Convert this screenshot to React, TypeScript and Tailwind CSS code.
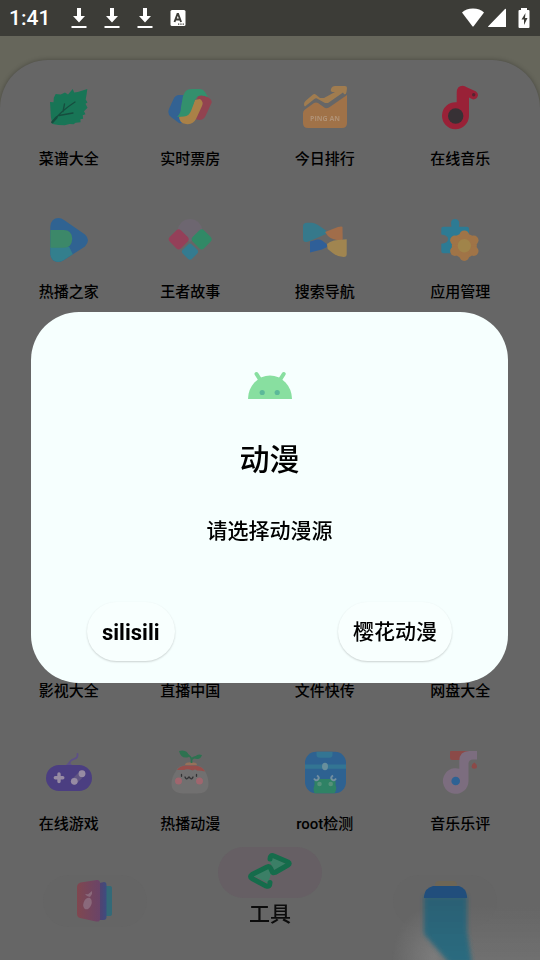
import React from 'react';

interface IconProps {
  children: React.ReactNode;
}

interface AppItem {
  name: string;
  icon?: React.ReactNode;
}

const Icon: React.FC<IconProps> = ({ children }) => (
  <svg viewBox="0 0 44 44" className="h-11 w-11 overflow-visible" aria-hidden="true">
    {children}
  </svg>
);

const LeafIcon = () => (
  <Icon>
    <path
      fill="#15664b"
      d="M40.300 4 39.500 10l-.8 4.500 1.800 3-2 1.200 2 4-3.500 3.500 1.500 3-2.800 1 .5 3.500-2.800.5.2 3-5 .5-2 1.500-4-.2-5 1.200-6-.2-6.200-1-1.500-6.800L3 17l3.500.2.3-4.500 1.900-3.700 5 .4L18 7.500l3 2 4.700-5.500 1.500 3.500 3.500-.6L34 6z"
    />
    <path fill="none" stroke="#134437" strokeWidth="1.300" strokeLinecap="round" d="M5 37.500C10 31 17 24 28 17M16 26.500 17.500 19M12 30.500l14-2.500" />
    <path fill="none" stroke="#134437" strokeWidth="2.400" strokeLinecap="round" d="m5.500 37 4-4.500" />
  </Icon>
);

const TicketIcon = () => (
  <Icon>
    <path fill="#7f3a46" d="M30 9 34 9 41 13q3.500 2 2.500 5l-6 13q-2 4-6 4l-5-1z" />
    <path fill="#2c5580" d="M17 10H11Q7.500 10 5.500 14L1 24q-2 5 2 8l8 6q5 1 9-3L22 12z" />
    <path fill="#94703e" d="M11 31.500 17 30q4-1 6-6l4-9 5-1q4 3 2 7l-6 13q-3 6-10 5-7-1-7-7.500z" />
    <path fill="#2c7d5f" d="m15 11 2-4q2-3 7-3h8q3 0 5 3l3 5q-8-3-11 0-2 2-3 6l-3 8q-2 5-7 5.500l-7 .5q4-4 4-10z" />
  </Icon>
);

const RankIcon = () => (
  <Icon>
    <path fill="#8b6c45" d="M1 19q0-2 2-3.500l7-6q1.500-1 3 .2L17 13h4l11-6h-3q-2-1-1-3 1-3 4-3h10q2 0 2 2l-.5 4q-.5 3-2.500 2l-1-1.500L25 18h-3l-8-4.500q-1.500-.5-3 .8L2 21.500Q1 21 1 19z" />
    <path fill="#8b633f" d="M0 28q0-2 2-3.500l9-6.500q2-1 4 0l7 5q2 .5 4-.5l18-12.500V38q0 5-5 5H5q-5 0-5-5z" />
    <text x="22" y="35.500" textAnchor="middle" fill="#9a7f66" fontSize="7" fontWeight="700" fontFamily="Open Sans, sans-serif">PING AN</text>
  </Icon>
);

const MusicIcon = () => (
  <Icon>
    <path fill="#851d30" d="M18.700 7.500q0-6.500 6-6.800 2.300 0 4 1.500L36 5.500q4 1.500 4 4.800-1 4.700-5.500 4L31 12.500v18A13.500 13.500 0 1 1 18.700 17.300z" />
    <circle cx="17.700" cy="31" r="7.700" fill="#302b2e" />
    <circle cx="35.700" cy="9.700" r="1.700" fill="#4c1f2b" />
  </Icon>
);

const PlayIcon = () => (
  <Icon>
    <path fill="#2a567f" d="M3.300 8.500Q4 0 11.500 0q3 0 5.500 2l21 14.500q6 5.500 0 12L17 42q-3 2-6 2-7-.5-7.700-8z" />
    <path fill="#2c6e7b" d="M3.300 29h19l3.500 7.300L17 42q-3 2-6 2-7-.5-7.700-8z" />
    <path fill="#34765b" d="M3.300 12h13.500q8 0 8.500 8.800-.5 9-8.500 9H3.300z" />
  </Icon>
);

const DiamondsIcon = () => (
  <Icon>
    <path fill="#5f5961" d="M9 13Q12 1 22 1t13 12l-9 8-4 3-4-3z" />
    <rect x="2.700" y="13.300" width="16" height="16" rx="3.500" fill="#81384d" transform="rotate(45 10.700 21.300)" />
    <rect x="25.700" y="13.300" width="16" height="16" rx="3.500" fill="#2b7759" transform="rotate(45 33.700 21.300)" />
    <rect x="15.500" y="27.200" width="13" height="13" rx="3" fill="#2d6b7d" transform="rotate(45 22 33.700)" />
  </Icon>
);

const CompassIcon = () => (
  <Icon>
    <path fill="#2f6979" d="M0 8q0-3 4-3.300l5 0q3 .3 6 2.300l8 5.500q1.500 1.500 0 3.500L7 23q-4 1.500-6 .5-1-1-1-3z" />
    <path fill="#8c5f40" d="m22 14 13-5q4-1 4.500 0l.2 12q0 2-2.500 2L30 21q-3-1-5-3z" />
    <path fill="#295384" d="M7 23.500 14 21.500q3-.5 5 1l4 3q2.500 2.500 0 4l-4 2-12 3z" />
    <path fill="#8b7446" d="m24 26 3-2q4-2 8-2l8.700-.8V36q0 3-3 3-6 0-11-4l-5-4z" />
  </Icon>
);

const PuzzleIcon = () => (
  <Icon>
    <path fill="#276b81" d="M5 8.700h8.500Q11.500 1 17 1t4 7.700h8q2 0 2 2v22.600q0 2-2 2H5.300q-2 0-2-2v-7.500q7-.5 6.700-4.700 0-4-6.700-4.500v-6q0-1.900 1.700-1.900z" />
    <g fill="#8b653e">
      <circle cx="26.300" cy="27.700" r="12.500" />
      <circle cx="26.300" cy="17.200" r="4.800" />
      <circle cx="35.700" cy="22.300" r="4.800" />
      <circle cx="35.700" cy="33.100" r="4.800" />
      <circle cx="26.300" cy="38.200" r="4.800" />
      <circle cx="16.900" cy="33.100" r="4.800" />
      <circle cx="16.900" cy="22.300" r="4.800" />
    </g>
    <circle cx="26.300" cy="27.700" r="6.700" fill="#8b7340" />
  </Icon>
);

const GamepadIcon = () => (
  <Icon>
    <path fill="none" stroke="#514675" strokeWidth="1.800" strokeLinecap="round" d="M22 14q1-4 5-5t3.500-5" />
    <path fill="#514675" d="m18 16 4-4 4 4z" />
    <rect x="-1" y="15" width="46" height="26" rx="13" fill="#413670" />
    <path stroke="#83798e" strokeWidth="3.400" strokeLinecap="round" d="M12 24v7.500M8.300 27.700h7.500" />
    <path stroke="#544a72" strokeWidth="6.500" strokeLinecap="round" d="m27.300 31.300 7.700-7.600" />
    <circle cx="27.300" cy="31.300" r="3.400" fill="#83798e" />
    <circle cx="35" cy="23.700" r="3.400" fill="#83798e" />
  </Icon>
);

const RadishIcon = () => (
  <Icon>
    <path fill="#626161" d="M8 21q1-6 14-6t15 6q3.500 6 3.500 13 0 9.500-12 9.500h-13q-12-.5-12-9.500 0-7 4.500-13z" />
    <path fill="#834441" d="M9 20q2-4 9-4.500h9q8 1 10 6-5-1.500-8-1-2-2-4 0-6-2-9-.5z" />
    <path fill="#82624e" d="M17 15q0-3 6-2.800Q29 12 29 15z" />
    <path fill="none" stroke="#286346" strokeWidth="1.800" d="M23.500 13V8.500M18 4q5 2 5.500 5.500Q25 7 29 7" />
    <path fill="#286346" d="M11 1q9-2 10 6-8 2.500-10-6zM26 8q3-5 8-3-2 6-8 3z" />
    <g fill="#8a5960">
      <circle cx="10.500" cy="31" r="3.500" />
      <circle cx="31.500" cy="31" r="3.500" />
    </g>
    <path fill="none" stroke="#2c2c2e" strokeWidth="1.300" strokeLinecap="round" d="M13.500 24.500v1.800M28.500 24.500v1.800M17 27q1 2.500 2.500 1.500L21 27l1.500 1.500Q24 29.500 25 27" />
  </Icon>
);

const RobotIcon = () => (
  <Icon>
    <rect x="2" y="1.700" width="41" height="41.500" rx="11" fill="#28557e" />
    <path fill="#2c6680" d="M13.500 1.700h16v3q0 3-3 3h-10q-3 0-3-3zM2 14.500h41v4.300H2z" />
    <ellipse cx="22" cy="16.500" rx="3" ry="3.700" fill="#5a7c88" />
    <path fill="#297158" d="M11.500 34q-1-6 5-5h11q6-1 5 5v1q2 4-1 8.200h-20q-2-4 0-8.200z" />
    <g fill="none" stroke="#647c8b" strokeWidth="2">
      <path d="M14 25.500q3 2 1 4t-4-1M30 25.500q-3 2-1 4t4-1" />
    </g>
    <g fill="#4b7e6a">
      <circle cx="16.500" cy="34" r="2.300" />
      <circle cx="27.700" cy="34" r="2.300" />
    </g>
  </Icon>
);

const ReviewIcon = () => (
  <Icon>
    <path fill="#79403f" d="M12 2q0-1 1-1h19l-4 9H14q-2 0-2-2z" />
    <path fill="#6c5f6e" d="M21.300 19V11q0-10 10-10H39v8.500h-4q-4.500 0-4.500 4.500v17A12.800 12.800 0 1 1 21.300 18.700z" />
    <circle cx="17.700" cy="31" r="4.300" fill="#285581" />
    <path fill="#79403f" d="M36.300 12.500q2.700 1.500 2.700 4 0 2.200-2.700 2.200t-2.700-2.200q0-2.500 2.700-4z" />
  </Icon>
);

const BookIcon = () => (
  <Icon>
    <defs>
      <linearGradient id="cover" x1="0" y1="0" x2="1" y2="0">
        <stop offset="0" stopColor="#80474f" />
        <stop offset="1" stopColor="#6a4468" />
      </linearGradient>
      <linearGradient id="pages" x1="0" y1="0" x2="1" y2="0">
        <stop offset="0.5" stopColor="#4f4472" />
        <stop offset="1" stopColor="#3d4d80" />
      </linearGradient>
    </defs>
    <path fill="#336a78" d="M30 7h7q2 0 2 2v26q0 2-2 2h-7z" />
    <path fill="url(#pages)" d="M22 5 31 3q2.500 0 2.500 3v32q0 3-3 3H22z" />
    <path fill="url(#cover)" d="M4 8q0-3.500 3.500-4.500L24 1q3 0 3 3v36q0 3-4 2.500L7 39q-3-1-3-4z" />
    <ellipse cx="14.500" cy="24.500" rx="4" ry="6" fill="#8a697b" transform="rotate(20 14.500 24.500)" />
    <path fill="#8a697b" d="m14 17-2-2 3 .2L19 12v3l-2 3z" />
  </Icon>
);

const ToolIcon = () => (
  <Icon>
    <path fill="#3b7f66" d="m24 6 14 7-12 6-4-8zM20 14l3 9-3 9L6 25z" />
    <path
      fill="none"
      stroke="#156c4b"
      strokeWidth="5"
      strokeLinecap="round"
      strokeLinejoin="round"
      d="M22 8q0-4.500 4-3L40 11q2.500 1.500 0 3L27 21.500q-2.500 1-3-1.200L22.500 17q-1-2-3.500-1L4 23.500q-3 2 0 4L18 35q4 1.500 4-3.500"
    />
  </Icon>
);

const AndroidIcon = () => (
  <Icon>
    <path stroke="#88dfa0" strokeWidth="4" strokeLinecap="round" d="M8.500 10 12 15.500M35.700 10 32.200 15.500" />
    <path fill="#88dfa0" d="M0 35a22 23.500 0 0 1 44 0z" />
    <circle cx="14.200" cy="28.500" r="2.600" fill="#5cb999" />
    <circle cx="29.200" cy="28.500" r="2.600" fill="#5cb999" />
  </Icon>
);

const DownloadIcon = () => (
  <svg viewBox="0 0 16 22" className="h-[22px] w-4" fill="#fff" aria-hidden="true">
    <path d="M6 1h4v8h4l-6 6.500L2 9h4zM.5 19h15v2H.5z" />
  </svg>
);

const topApps: AppItem[] = [
  { name: '菜谱大全', icon: <LeafIcon /> },
  { name: '实时票房', icon: <TicketIcon /> },
  { name: '今日排行', icon: <RankIcon /> },
  { name: '在线音乐', icon: <MusicIcon /> },
  { name: '热播之家', icon: <PlayIcon /> },
  { name: '王者故事', icon: <DiamondsIcon /> },
  { name: '搜索导航', icon: <CompassIcon /> },
  { name: '应用管理', icon: <PuzzleIcon /> },
];

const bottomApps: AppItem[] = [
  { name: '影视大全' },
  { name: '直播中国' },
  { name: '文件快传' },
  { name: '网盘大全' },
  { name: '在线游戏', icon: <GamepadIcon /> },
  { name: '热播动漫', icon: <RadishIcon /> },
  { name: 'root检测', icon: <RobotIcon /> },
  { name: '音乐乐评', icon: <ReviewIcon /> },
];

const StatusBar = () => (
  <header className="flex h-9 items-center bg-[#3c3c37] pr-2.5 pl-[9px] text-white">
    <span className="w-10 text-[21px] leading-6 font-medium">1:41</span>
    <div className="ml-[22px] flex items-center gap-[17px]">
      <DownloadIcon />
      <DownloadIcon />
      <DownloadIcon />
      <svg viewBox="0 0 16 16" className="h-4 w-4" aria-hidden="true">
        <rect x="0.500" width="15" height="16" rx="1.500" fill="#fff" />
        <path fill="none" stroke="#3c3c37" strokeWidth="1.900" d="M4.500 12 7.500 4h.6l3 8M5.500 9.500h4.500" />
        <path stroke="#3c3c37" strokeWidth="1.300" strokeDasharray="1.300 1" d="M8 14.200h6.500" />
      </svg>
    </div>
    <div className="ml-auto flex items-center">
      <svg viewBox="0 0 22 20" className="h-5 w-[22px]" fill="#fff" aria-hidden="true">
        <path d="M0 4.500Q4 .5 11 .5t11 4L11.800 18q-.8 1-1.600 0z" />
      </svg>
      <svg viewBox="0 0 18 20" className="ml-1 h-5 w-[18px]" fill="#fff" aria-hidden="true">
        <path d="M17 1q1-.5 1 .5V19H1q-1.500 0-.5-1z" />
      </svg>
      <svg viewBox="0 0 12 20" className="ml-3 h-5 w-3" aria-hidden="true">
        <path fill="#fff" d="M3 0h6v2h1.500q1 0 1 1v16q0 1-1 1h-9q-1 0-1-1V3q0-1 1-1H3z" />
        <path fill="#3c3c37" d="M7.500 5 3.500 11.500H6V17l3.500-7H7z" />
      </svg>
    </div>
  </header>
);

const AppGrid: React.FC<{ items: AppItem[] }> = ({ items }) => (
  <div className="grid grid-cols-[111fr_131fr_137fr_133fr] gap-y-[46px] px-[13px]">
    {items.map((item) => (
      <button key={item.name} type="button" className="flex flex-col items-center gap-[18px]">
        <span className="h-11 w-11 brightness-115">{item.icon}</span>
        <span className="text-[15px] leading-[25px] font-medium">{item.name}</span>
      </button>
    ))}
  </div>
);

const BottomNav = () => (
  <nav className="fixed inset-x-0 bottom-0 grid h-[113px] grid-cols-3 px-2">
    <div className="flex justify-center pt-7">
      <button type="button" aria-label="Books" className="flex h-13 w-26 items-center justify-center rounded-full bg-[#656565]">
        <BookIcon />
      </button>
    </div>
    <button type="button" className="flex flex-col items-center">
      <span className="flex h-[51px] w-26 items-center justify-center rounded-full bg-[#665f64]">
        <ToolIcon />
      </span>
      <span className="text-[21px] leading-8 font-medium text-[#0c0c0c]">工具</span>
    </button>
    <div className="flex justify-center pt-7">
      <button type="button" aria-label="Profile" className="h-13 w-26 rounded-full bg-[#656565]" />
    </div>
    <svg viewBox="0 0 150 90" className="pointer-events-none absolute right-0 bottom-0 h-[90px] w-[150px]" aria-hidden="true">
      <defs>
        <filter id="edge" x="-20%" y="-20%" width="140%" height="140%">
          <feGaussianBlur stdDeviation="2" />
        </filter>
        <radialGradient id="glow" cx="0.5" cy="0.5" r="0.5">
          <stop offset="0" stopColor="#7c7c7c" />
          <stop offset="1" stopColor="#7c7c7c" stopOpacity="0" />
        </radialGradient>
        <linearGradient id="haze" x1="0" y1="0" x2="0" y2="1">
          <stop offset="0" stopColor="#707070" stopOpacity="0" />
          <stop offset="1" stopColor="#707070" />
        </linearGradient>
        <linearGradient id="body" x1="0" y1="0" x2="0" y2="1">
          <stop offset="0" stopColor="#2a6074" />
          <stop offset="1" stopColor="#2c6c80" />
        </linearGradient>
      </defs>
      <path fill="url(#haze)" d="M60 35h90v55H60z" />
      <ellipse cx="44" cy="88" rx="42" ry="52" fill="url(#glow)" />
      <path fill="url(#body)" filter="url(#edge)" d="M34 26h43v34l5 34H60L34 64z" />
      <path fill="#6e6655" d="M45 16v-1q0-4 4-4h14q4 0 4 4v1z" />
      <path fill="#214e7c" d="M34 28v-2q1-8 9-10h26q7 2 8 10v2z" />
    </svg>
  </nav>
);

const SourceDialog = () => (
  <div className="fixed inset-x-0 top-9 bottom-0 flex items-center pr-8 pb-px pl-[31px]">
    <section
      role="dialog"
      aria-modal="true"
      aria-labelledby="dialog-title"
      className="flex w-full flex-col items-center rounded-[48px] bg-[#f6fffe] pt-13 pb-[22px]"
    >
      <AndroidIcon />
      <h1 id="dialog-title" className="mt-8 text-[30px] leading-10 font-medium">动漫</h1>
      <p className="mt-[35px] text-[21px] leading-8 font-medium">请选择动漫源</p>
      <div className="mt-[55px] flex w-full justify-between px-14">
        <button type="button" className="h-[59px] rounded-full bg-[#f8fffe] px-[15px] pt-0.5 text-[22px] font-bold shadow-[0_1px_2px_rgba(0,0,0,0.18)]">
          silisili
        </button>
        <button type="button" className="h-[59px] rounded-full bg-[#f8fffe] px-[15px] pt-0.5 text-[21px] font-medium shadow-[0_1px_2px_rgba(0,0,0,0.18)]">
          樱花动漫
        </button>
      </div>
    </section>
  </div>
);

const App = () => {
  return (
    <div className="flex min-h-screen flex-col bg-[#66665b] font-['Roboto','Noto_Sans_CJK_SC',sans-serif] text-black">
      <StatusBar />
      <main className="mt-6 flex-1 rounded-t-[48px] bg-[#666666] pt-[25px] shadow-[0_0_5px_rgba(0,0,0,0.3)]">
        <AppGrid items={topApps} />
        {/* the rows in between stay under the dialog */}
        <div className="h-[312px]" />
        <AppGrid items={bottomApps} />
      </main>
      <BottomNav />
      <SourceDialog />
    </div>
  );
};

export default App;
